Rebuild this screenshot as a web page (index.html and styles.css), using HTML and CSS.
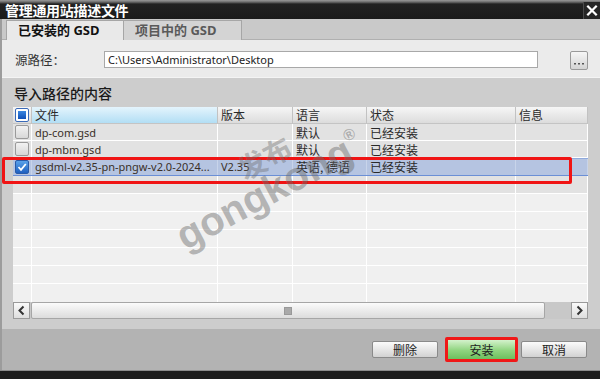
FILE: index.html
```html
<!DOCTYPE html>
<html>
<head>
<meta charset="utf-8">
<link rel="stylesheet" href="styles.css">
</head>
<body>
<div class="dialog">
  <div class="titlebar">
    <span class="title">管理通用站描述文件</span>
    <span class="close"><svg width="17" height="17" viewBox="0 0 17 17"><path d="M3.5 3.5 L13.5 13.5 M13.5 3.5 L3.5 13.5" stroke="#fff" stroke-width="2.4" fill="none"/></svg></span>
  </div>
  <div class="frame">
    <div class="tabs">
      <div class="tab active">已安装的 GSD</div>
      <div class="tab">项目中的 GSD</div>
    </div>
    <div class="source">
      <span class="label">源路径：</span>
      <div class="input">C:\Users\Administrator\Desktop</div>
      <div class="browse"><svg width="16" height="17" viewBox="0 0 16 17"><rect x="3" y="11" width="2" height="1.5" fill="#555"/><rect x="7" y="11" width="2" height="1.5" fill="#555"/><rect x="11" y="11" width="2" height="1.5" fill="#555"/></svg></div>
    </div>
    <div class="import">
      <div class="section-title">导入路径的内容</div>
      <div class="table">
        <div class="row head">
          <div class="cell"><span class="cb indet"></span></div>
          <div class="cell sorted">文件</div>
          <div class="cell">版本</div>
          <div class="cell">语言</div>
          <div class="cell">状态</div>
          <div class="cell">信息</div>
        </div>
        <div class="row data r17">
          <div class="cell"><span class="cb"></span></div>
          <div class="cell">dp-com.gsd</div>
          <div class="cell"></div>
          <div class="cell">默认</div>
          <div class="cell">已经安装</div>
          <div class="cell"></div>
        </div>
        <div class="row data r17">
          <div class="cell"><span class="cb"></span></div>
          <div class="cell">dp-mbm.gsd</div>
          <div class="cell"></div>
          <div class="cell">默认</div>
          <div class="cell">已经安装</div>
          <div class="cell"></div>
        </div>
        <div class="row data selected">
          <div class="cell"><span class="cb checked"><svg width="10" height="10" viewBox="0 0 10 10"><path d="M1.5 5 L4 7.8 L8.8 2" stroke="#fff" stroke-width="1.8" fill="none"/></svg></span></div>
          <div class="cell">gsdml-v2.35-pn-pngw-v2.0-2024...</div>
          <div class="cell">V2.35</div>
          <div class="cell">英语, 德语</div>
          <div class="cell">已经安装</div>
          <div class="cell"></div>
        </div>
        <div class="row data">
          <div class="cell"></div><div class="cell"></div><div class="cell"></div><div class="cell"></div><div class="cell"></div><div class="cell"></div>
        </div>
        <div class="row empty">
          <div class="cell"></div><div class="cell"></div><div class="cell"></div><div class="cell"></div><div class="cell"></div><div class="cell"></div>
        </div>
        <div class="row empty">
          <div class="cell"></div><div class="cell"></div><div class="cell"></div><div class="cell"></div><div class="cell"></div><div class="cell"></div>
        </div>
        <div class="row empty">
          <div class="cell"></div><div class="cell"></div><div class="cell"></div><div class="cell"></div><div class="cell"></div><div class="cell"></div>
        </div>
        <div class="row empty">
          <div class="cell"></div><div class="cell"></div><div class="cell"></div><div class="cell"></div><div class="cell"></div><div class="cell"></div>
        </div>
        <div class="row empty">
          <div class="cell"></div><div class="cell"></div><div class="cell"></div><div class="cell"></div><div class="cell"></div><div class="cell"></div>
        </div>
        <div class="row empty last">
          <div class="cell"></div><div class="cell"></div><div class="cell"></div><div class="cell"></div><div class="cell"></div><div class="cell"></div>
        </div>
      </div>
      <div class="hscroll">
        <div class="sbtn"><svg width="9" height="11" viewBox="0 0 9 11"><path d="M6.5 1.5 L2.5 5.5 L6.5 9.5" stroke="#333" stroke-width="2" fill="none"/></svg></div>
        <div class="thumb"><span class="grip"></span></div>
        <div class="track"></div>
        <div class="sbtn"><svg width="9" height="11" viewBox="0 0 9 11"><path d="M2.5 1.5 L6.5 5.5 L2.5 9.5" stroke="#333" stroke-width="2" fill="none"/></svg></div>
      </div>
    </div>
    <div class="footer">
      <button class="btn del">删除</button>
      <button class="btn install">安装</button>
      <button class="btn cancel">取消</button>
    </div>
  </div>
  <div class="bottom"></div>
  <div class="highlight"></div>
  <div class="wm-cn">发布</div>
  <div class="wm">gongkong<span class="reg">®</span></div>
</div>
</body>
</html>
```

FILE: styles.css
```css
* { box-sizing: border-box; }
html, body { margin: 0; padding: 0; }
body {
  width: 600px;
  height: 379px;
  overflow: hidden;
  font-family: "Noto Sans", "Noto Sans CJK SC", sans-serif;
  font-size: 12px;
  color: #222;
}
.dialog {
  position: relative;
  width: 600px;
  height: 379px;
  background: #b3b3b3;
  overflow: hidden;
}
.titlebar {
  height: 19px;
  background: linear-gradient(#9a9a9a 0, #6c6c6c 2px, #222 4px, #1a1a1a 100%);
  display: flex;
  align-items: center;
  justify-content: space-between;
}
.title {
  color: #fff;
  font-family: "Noto Sans CJK SC", sans-serif;
  font-size: 14px;
  font-weight: bold;
  line-height: 19px;
  padding-left: 5px;
  padding-top: 2px;
  letter-spacing: -0.3px;
}
.close {
  width: 17px;
  height: 17px;
  margin-top: 2px;
  background: #262626;
  border-left: 1px solid #4a4a4a;
  display: flex;
}
.frame {
  border-left: 2px solid #9c9c9c;
}
.tabs {
  height: 21px;
  background: #c9c9c9;
  border-bottom: 1px solid #b0b0b0;
  display: flex;
  align-items: flex-end;
  padding-left: 4px;
}
.tab {
  width: 118px;
  height: 20px;
  margin-bottom: -1px;
  border: 1px solid #a6a6a6;
  border-bottom: none;
  background: #d4d4d4;
  color: #5a5a5a;
  font-family: "Noto Sans", "Noto Sans CJK SC", sans-serif;
  font-size: 13px;
  font-weight: bold;
  line-height: 19px;
  padding-left: 11px;
}
.tab + .tab { border-left: none; }
.tab.active {
  background: #e9e9e9;
  color: #111;
}
.source {
  height: 38px;
  background: #ebebeb;
  display: flex;
  align-items: flex-start;
  padding: 11px 12px 0 13px;
  border-bottom: 1px solid #f4f4f4;
}
.label {
  width: 89px;
  font-family: "Noto Sans CJK SC", sans-serif;
  font-size: 12.5px;
  line-height: 17px;
  color: #333;
}
.input {
  width: 434px;
  height: 17px;
  background: #fff;
  border: 1px solid #a8a8a8;
  font-size: 11px;
  line-height: 15px;
  padding-left: 3px;
  color: #222;
}
.browse {
  width: 18px;
  height: 19px;
  margin-left: 32px;
  border: 1px solid #9a9a9a;
  border-radius: 2px;
  background: linear-gradient(#f6f6f6, #d4d4d4);
  display: flex;
}
.import {
  height: 251px;
  background: #cdcdcd;
  padding: 5px 12px 10px 11px;
}
.section-title {
  font-family: "Noto Sans CJK SC", sans-serif;
  font-size: 14px;
  line-height: 20px;
  height: 24px;
  padding-left: 1px;
  color: #1a1a1a;
  font-weight: 500;
}
.table {
  height: 195px;
  background: #f0f0f0;
  overflow: hidden;
}
.row {
  display: grid;
  grid-template-columns: 19px 186px 75px 74px 149px 72px;
  height: 18px;
  border-bottom: 1px solid #fff;
}
.row.r17 { height: 17px; }
.cell {
  border-right: 1px solid #fff;
  padding-left: 3px;
  line-height: 17px;
  white-space: nowrap;
  overflow: hidden;
  font-size: 11px;
  color: #3a3028;
}
.cell:first-child { padding-left: 2px; display: flex; align-items: center; }
.row.head {
  height: 17px;
  background: linear-gradient(#f6f6f6, #dcdcdc);
  border-bottom: 1px solid #c4c4c4;
}
.row.head .cell {
  border-right: 1px solid #c2c2c2;
  font-family: "Noto Sans CJK SC", sans-serif;
  font-size: 12px;
  line-height: 16px;
  color: #2a2a2a;
}
.row.head .cell.sorted {
  background: linear-gradient(#e4f4fc, #b2def4);
}
.row.data { background: #e2e2e2; }
.row.data .cell:nth-child(4),
.row.data .cell:nth-child(5) {
  font-family: "Noto Sans CJK SC", sans-serif;
  font-size: 12px;
  color: #2a2a2a;
}
.row.selected {
  background: #b5c4e1;
  border-top: 1px solid #90aadc;
  border-bottom: 1px solid #6b8fd6;
}
.row.selected .cell { border-right-color: #c8d4ea; line-height: 16px; }
.row.empty { background: #f0f0f0; }
.row.last { border-bottom: none; }
.cb {
  width: 14px;
  height: 14px;
  border: 1px solid #9a9a9a;
  border-radius: 2px;
  background: linear-gradient(#f2f2f2, #d8d8d8);
  display: block;
}
.cb.indet {
  border-color: #3a6ab8;
  background: #fff;
  padding: 2px;
}
.cb.indet::after {
  content: "";
  display: block;
  width: 8px;
  height: 8px;
  background: linear-gradient(#3a86e0, #1050b8);
}
.cb.checked {
  border-color: #2a5aa8;
  background: linear-gradient(#5aa2ea, #1f5fc0);
  display: flex;
  align-items: center;
  justify-content: center;
}
.hscroll {
  height: 17px;
  display: flex;
  background: #c8c8c8;
}
.sbtn {
  width: 17px;
  height: 17px;
  border: 1px solid #9a9a9a;
  background: linear-gradient(#fafafa, #dedede);
  display: flex;
  align-items: center;
  justify-content: center;
}
.thumb {
  width: 514px;
  margin-left: 1px;
  border: 1px solid #a6a6a6;
  border-radius: 2px;
  background: linear-gradient(#fbfbfb, #dcdcdc);
  display: flex;
  align-items: center;
  padding-left: 252px;
}
.grip {
  width: 8px;
  height: 8px;
  background: #a9a9a9;
  border: 1px solid #999;
}
.track { flex: 1; }
.footer {
  height: 41px;
  background: #b3b3b3;
  display: flex;
  align-items: center;
  justify-content: flex-end;
  padding-right: 13px;
}
.btn {
  width: 66px;
  height: 17px;
  padding: 0;
  border: 1px solid #8a8a8a;
  border-radius: 2px;
  background: linear-gradient(#fbfbfb, #d2d2d2);
  font-family: "Noto Sans CJK SC", sans-serif;
  font-size: 12px;
  line-height: 14px;
  color: #222;
  text-align: center;
}
.btn.install {
  width: 73px;
  height: 25px;
  margin-left: 7px;
  margin-right: 3px;
  border: 3px solid #f01818;
  border-radius: 2px;
  background: linear-gradient(#d4f2cc, #8fd47f 55%, #6dbf5e);
  line-height: 18px;
}
.bottom {
  height: 9px;
  background: #1c1c1c;
  border-top: 1px solid #8a8a8a;
}
.highlight {
  position: absolute;
  left: 2px;
  top: 157px;
  width: 570px;
  height: 27px;
  border: 3px solid #f01414;
  border-radius: 2px;
}
.wm {
  position: absolute;
  left: 188px;
  top: 205px;
  transform: rotate(-28deg);
  transform-origin: left bottom;
  font-family: "Liberation Sans", sans-serif;
  font-weight: bold;
  font-size: 40px;
  line-height: 40px;
  color: rgba(105, 105, 105, 0.45);
  white-space: nowrap;
}
.wm .reg { font-size: 16px; vertical-align: 20px; }
.wm-cn {
  position: absolute;
  left: 236px;
  top: 142px;
  transform: rotate(-28deg);
  font-family: "Noto Sans CJK SC", sans-serif;
  font-weight: bold;
  font-size: 28px;
  line-height: 30px;
  color: rgba(105, 105, 105, 0.4);
  white-space: nowrap;
}
```
